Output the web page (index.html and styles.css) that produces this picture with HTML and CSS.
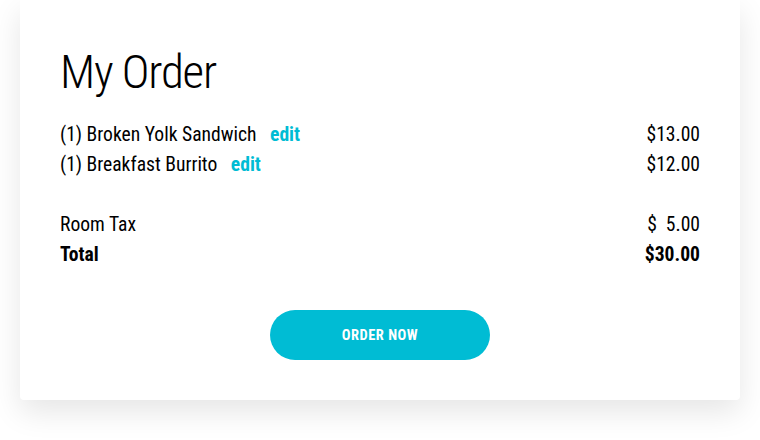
FILE: index.html
```html
<!DOCTYPE html>
<html>
<head>
<meta charset="utf-8">
<link rel="stylesheet" href="styles.css">
</head>
<body>
<div class="card">
  <h1 class="title">My Order</h1>
  <div class="items">
    <div class="row"><span>(1) Broken Yolk Sandwich <a class="edit">edit</a></span><span>$13.00</span></div>
    <div class="row"><span>(1) Breakfast Burrito <a class="edit">edit</a></span><span>$12.00</span></div>
  </div>
  <div class="totals">
    <div class="row"><span>Room Tax</span><span class="pre">$  5.00</span></div>
    <div class="row bold"><span>Total</span><span>$30.00</span></div>
  </div>
  <div class="actions"><button class="btn">ORDER NOW</button></div>
</div>
</body>
</html>
```
FILE: styles.css
```css
html, body { margin: 0; padding: 0; background: #fff; }
body {
  font-family: "Roboto Condensed", Roboto, sans-serif;
  font-stretch: condensed;
  color: #000;
  width: 760px; height: 440px; overflow: hidden;
}
.card {
  margin: 0 20px;
  height: 400px;
  box-sizing: border-box;
  background: #fff;
  border-radius: 0 0 4px 4px;
  box-shadow: 0 12px 30px rgba(0,0,0,0.10);
  padding: 40px 40px 0 40px;
}
.title {
  margin: 0;
  font-size: 47px;
  font-weight: 300;
  letter-spacing: -1.2px;
  line-height: 64px;
}
.items { margin-top: 16px; }
.row {
  display: flex;
  justify-content: space-between;
  font-size: 19.6px;
  line-height: 30px;
}
.pre { white-space: pre; }
.edit {
  color: #00bcd4;
  font-weight: 700;
  margin-left: 9px;
}
.totals { margin-top: 30px; }
.bold { font-weight: 700; }
.actions {
  display: flex;
  justify-content: center;
  margin-top: 40px;
}
.btn {
  width: 220px;
  height: 50px;
  border: none;
  border-radius: 25px;
  background: #00bcd4;
  color: #fff;
  font-family: inherit;
  font-stretch: condensed;
  font-weight: 700;
  font-size: 14.5px;
  letter-spacing: 0.5px;
}
```
